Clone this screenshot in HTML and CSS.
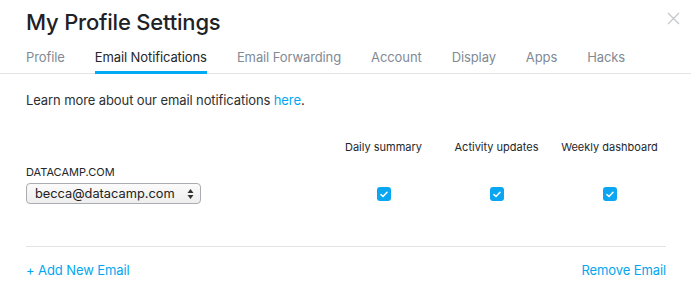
FILE: index.html
```html
<!DOCTYPE html>
<html>
<head>
<meta charset="utf-8">
<link rel="stylesheet" href="styles.css">
</head>
<body>
<div class="modal">
  <div class="header">
    <h1 class="title">My Profile Settings</h1>
    <button class="close" aria-label="Close">
      <svg width="13" height="13" viewBox="0 0 13 13"><path d="M1 1 L12 12 M12 1 L1 12" stroke="#c3c8cd" stroke-width="1.3" fill="none"/></svg>
    </button>
  </div>
  <nav class="tabs">
    <a class="tab">Profile</a>
    <a class="tab active">Email Notifications</a>
    <a class="tab">Email Forwarding</a>
    <a class="tab">Account</a>
    <a class="tab">Display</a>
    <a class="tab">Apps</a>
    <a class="tab">Hacks</a>
  </nav>
  <div class="content">
    <p class="intro">Learn more about our email notifications <a class="link">here</a>.</p>
    <div class="grid">
      <div class="cell"></div>
      <div class="colhead">Daily summary</div>
      <div class="colhead">Activity updates</div>
      <div class="colhead">Weekly dashboard</div>

      <div class="account">
        <div class="domain">DATACAMP.COM</div>
        <div class="select">
          <span>becca@datacamp.com</span>
          <svg width="7" height="12" viewBox="0 0 7 12"><path d="M3.5 1 L6.5 5 L0.5 5 Z M3.5 11 L6.5 7 L0.5 7 Z" fill="#333"/></svg>
        </div>
      </div>
      <div class="checkcell"><span class="check"><svg width="8" height="7" viewBox="0 0 8 7"><path d="M1 3.6 L3 5.5 L7 1.2" stroke="#fff" stroke-width="1.5" fill="none" stroke-linecap="round" stroke-linejoin="round"/></svg></span></div>
      <div class="checkcell"><span class="check"><svg width="8" height="7" viewBox="0 0 8 7"><path d="M1 3.6 L3 5.5 L7 1.2" stroke="#fff" stroke-width="1.5" fill="none" stroke-linecap="round" stroke-linejoin="round"/></svg></span></div>
      <div class="checkcell"><span class="check"><svg width="8" height="7" viewBox="0 0 8 7"><path d="M1 3.6 L3 5.5 L7 1.2" stroke="#fff" stroke-width="1.5" fill="none" stroke-linecap="round" stroke-linejoin="round"/></svg></span></div>
    </div>
    <div class="footer">
      <a class="link">+ Add New Email</a>
      <a class="link">Remove Email</a>
    </div>
  </div>
</div>
</body>
</html>
```
FILE: styles.css
```css
* { box-sizing: border-box; }
html, body { margin: 0; padding: 0; background: #fff; }
body {
  font-family: Inter, "Noto Sans", "Liberation Sans", sans-serif;
  color: #2b2f33;
  width: 691px;
  height: 290px;
  overflow: hidden;
}
.header {
  display: flex;
  justify-content: space-between;
  align-items: flex-start;
  padding: 8px 11px 0 26px;
}
.title {
  margin: 0;
  font-size: 22px;
  line-height: 28px;
  font-weight: 500;
  color: #1e2126;
  letter-spacing: -0.2px;
}
.close {
  border: 0;
  background: none;
  padding: 0;
  margin-top: 4px;
  width: 13px;
  height: 13px;
  display: flex;
}
.tabs {
  display: flex;
  gap: 30px;
  padding: 0 26px;
  margin-top: 12px;
  border-bottom: 1px solid #e1e4e7;
}
.tab {
  font-size: 13px;
  line-height: 18px;
  letter-spacing: -0.1px;
  color: #7f8a95;
  padding-bottom: 5px;
  border-bottom: 3px solid transparent;
  margin-bottom: -1px;
}
.tab.active {
  color: #23272b;
  border-bottom-color: #02a9f4;
}
.content {
  padding: 0 25px 0 26px;
}
.intro {
  margin: 17px 0 0 0;
  font-size: 13px;
  line-height: 18px;
  letter-spacing: -0.1px;
  color: #2b2f33;
}
.link {
  color: #02a6ef;
}
.grid {
  display: grid;
  grid-template-columns: 1fr 113px 113px 113px;
  margin-top: 30px;
  padding-bottom: 42px;
  border-bottom: 1px solid #e1e4e7;
}
.colhead {
  font-size: 11px;
  line-height: 16px;
  text-align: center;
  color: #23272b;
}
.account {
  padding-top: 10px;
}
.domain {
  font-size: 11px;
  line-height: 14px;
  color: #23272b;
  margin-bottom: 4px;
}
.select {
  width: 175px;
  height: 21px;
  border: 1px solid #a9adb1;
  border-radius: 4px;
  background: linear-gradient(#fbfbfb, #eeeeee);
  display: flex;
  align-items: center;
  justify-content: space-between;
  padding: 0 6px 0 8px;
  font-size: 12.8px;
  color: #222;
}
.select svg { display: block; }
.checkcell {
  display: flex;
  justify-content: center;
  align-items: flex-end;
  padding-bottom: 3px;
}
.check {
  width: 14px;
  height: 14px;
  border-radius: 3px;
  background: #0aa6f2;
  display: flex;
  align-items: center;
  justify-content: center;
}
.check svg { display: block; }
.footer {
  display: flex;
  justify-content: space-between;
  padding-top: 14px;
  font-size: 13px;
  line-height: 18px;
  letter-spacing: -0.1px;
}
```
